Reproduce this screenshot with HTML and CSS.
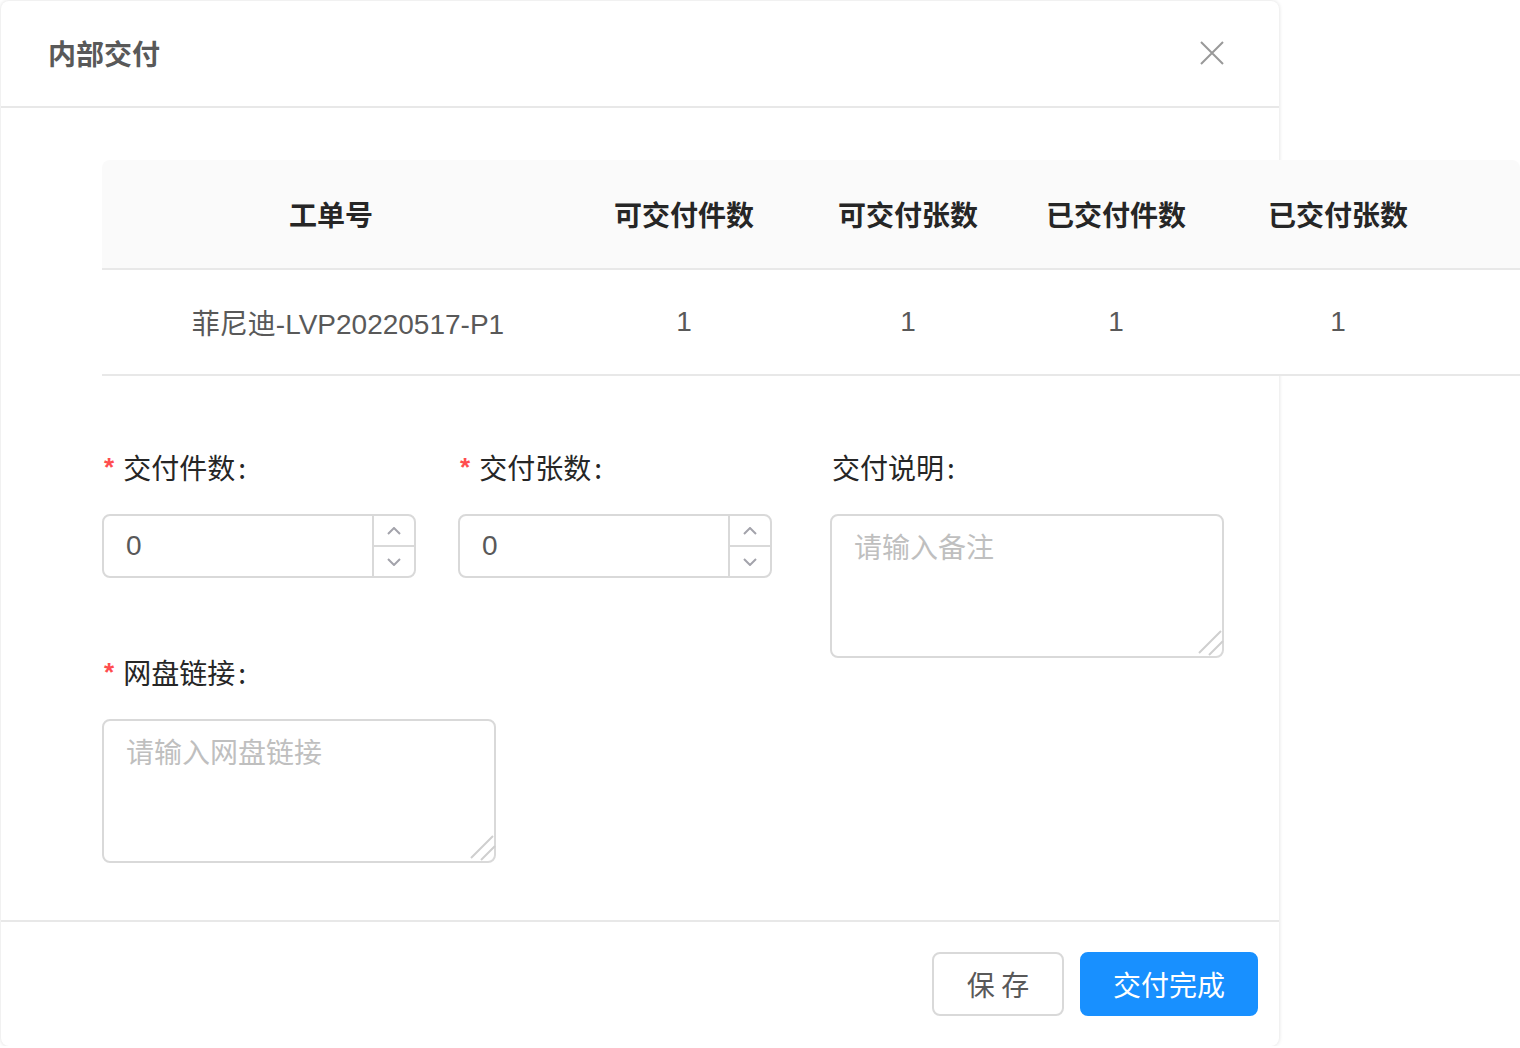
FILE: index.html
```html
<!DOCTYPE html>
<html lang="zh-CN">
<head>
<meta charset="utf-8">
<title>内部交付</title>
<link rel="stylesheet" href="styles.css">
</head>
<body>
<div class="modal">
  <div class="modal-header">
    <div class="modal-title">内部交付</div>
    <button class="modal-close" type="button" aria-label="关闭">
      <svg width="24" height="24" viewBox="0 0 24 24"><path d="M1 1L23 23M23 1L1 23" stroke="#999" stroke-width="2" fill="none"/></svg>
    </button>
  </div>
  <div class="modal-body">
    <div class="table">
      <div class="tr thead">
        <div class="cell c1">工单号</div>
        <div class="cell">可交付件数</div>
        <div class="cell">可交付张数</div>
        <div class="cell">已交付件数</div>
        <div class="cell">已交付张数</div>
        <div class="cell"></div>
      </div>
      <div class="tr tbody">
        <div class="cell c1d">菲尼迪-LVP20220517-P1</div>
        <div class="cell">1</div>
        <div class="cell">1</div>
        <div class="cell">1</div>
        <div class="cell">1</div>
        <div class="cell"></div>
      </div>
    </div>
    <div class="form">
      <div class="item i1">
        <div class="label req">交付件数</div>
        <div class="num">
          <input class="num-input" value="0">
          <div class="handler">
            <span class="hup"><svg width="14" height="8" viewBox="0 0 14 8"><polyline points="1,7 7,1 13,7" fill="none" stroke="#a3a3ab" stroke-width="2"/></svg></span>
            <span class="hdown"><svg width="14" height="8" viewBox="0 0 14 8"><polyline points="1,1 7,7 13,1" fill="none" stroke="#a3a3ab" stroke-width="2"/></svg></span>
          </div>
        </div>
      </div>
      <div class="item i2">
        <div class="label req">交付张数</div>
        <div class="num">
          <input class="num-input" value="0">
          <div class="handler">
            <span class="hup"><svg width="14" height="8" viewBox="0 0 14 8"><polyline points="1,7 7,1 13,7" fill="none" stroke="#a3a3ab" stroke-width="2"/></svg></span>
            <span class="hdown"><svg width="14" height="8" viewBox="0 0 14 8"><polyline points="1,1 7,7 13,1" fill="none" stroke="#a3a3ab" stroke-width="2"/></svg></span>
          </div>
        </div>
      </div>
      <div class="item i3">
        <div class="label">交付说明</div>
        <div class="ta-wrap">
          <textarea class="ta" placeholder="请输入备注"></textarea>
          <svg class="grip" width="28" height="28" viewBox="0 0 28 28"><path d="M3 25L25 3M13 27L27 13" stroke="#cfcfcf" stroke-width="2" fill="none"/></svg>
        </div>
      </div>
      <div class="item i4">
        <div class="label req">网盘链接</div>
        <div class="ta-wrap">
          <textarea class="ta" placeholder="请输入网盘链接"></textarea>
          <svg class="grip" width="28" height="28" viewBox="0 0 28 28"><path d="M3 25L25 3M13 27L27 13" stroke="#cfcfcf" stroke-width="2" fill="none"/></svg>
        </div>
      </div>
    </div>
  </div>
  <div class="modal-footer">
    <button class="btn" type="button">保 存</button>
    <button class="btn primary" type="button">交付完成</button>
  </div>
</div>
</body>
</html>
```

FILE: styles.css
```css
* { box-sizing: border-box; }
body {
  margin: 0;
  background: #fff;
  font-family: "Noto Sans CJK SC", "Noto Sans", sans-serif;
  font-size: 28px;
  color: #262626;
}
.modal {
  width: 1278px;
  margin: 1px 0 0 1px;
  background: #fff;
  border-radius: 8px;
  box-shadow: 0 0 4px rgba(0, 0, 0, 0.14);
}
.modal-header {
  display: flex;
  align-items: center;
  justify-content: space-between;
  padding: 30px 55px 31px 47px;
  border-bottom: 2px solid #e8e8e8;
}
.modal-title {
  font-size: 28px;
  line-height: 44px;
  font-weight: 700;
  color: #595959;
}
.modal-close {
  border: none;
  background: transparent;
  padding: 0;
  width: 24px;
  height: 24px;
  display: flex;
}
.modal-body {
  padding: 52px 0 57px 101px;
}
.table {
  width: 1418px;
}
.tr {
  display: grid;
  grid-template-columns: 470px 224px 224px 192px 252px 56px;
  border-bottom: 2px solid #e8e8e8;
}
.cell {
  display: flex;
  align-items: center;
  justify-content: center;
}
.thead {
  height: 110px;
  background: #fafafa;
  border-radius: 8px 8px 0 0;
  font-weight: 700;
  color: #262626;
}
.thead .c1 { padding-right: 12px; }
.tbody {
  height: 106px;
  background: #fff;
  color: #595959;
  font-family: "Liberation Sans", "Noto Sans CJK SC", sans-serif;
}
.tbody .c1d { padding-left: 22px; }
.form {
  margin-top: 69px;
  display: grid;
  grid-template-columns: 356px 372px 394px;
  row-gap: 72px;
  align-items: start;
}
.i1 { grid-column: 1; grid-row: 1; }
.i2 { grid-column: 2; grid-row: 1; }
.i3 { grid-column: 3; grid-row: 1 / span 2; }
.i4 { grid-column: 1 / span 2; grid-row: 2; }
.label {
  height: 44px;
  line-height: 44px;
  margin-bottom: 25px;
  color: #262626;
  padding-left: 2px;
}
.label::after {
  content: ":";
  margin-left: 3px;
}
.req {
  padding-left: 0;
}
.req::before {
  content: "*";
  color: #ff4d4f;
  font-family: "Liberation Sans", sans-serif;
  font-size: 26px;
  font-weight: 700;
  margin: 0 9px 0 2px;
  position: relative;
  top: -3px;
}
.num {
  width: 314px;
  height: 64px;
  border: 2px solid #d9d9d9;
  border-radius: 8px;
  display: flex;
  overflow: hidden;
}
.num-input {
  flex: 1;
  min-width: 0;
  border: none;
  outline: none;
  background: transparent;
  padding: 0 22px;
  font-family: "Liberation Sans", sans-serif;
  font-size: 28px;
  color: #595959;
}
.handler {
  width: 42px;
  border-left: 2px solid #d9d9d9;
  display: flex;
  flex-direction: column;
}
.hup, .hdown {
  flex: 1;
  display: flex;
  align-items: center;
  justify-content: center;
}
.hdown {
  border-top: 2px solid #d9d9d9;
}
.ta-wrap {
  position: relative;
  width: 394px;
  height: 144px;
}
.ta {
  display: block;
  width: 394px;
  height: 144px;
  border: 2px solid #d9d9d9;
  border-radius: 8px;
  padding: 8px 22px;
  font-family: inherit;
  font-size: 28px;
  line-height: 44px;
  color: #595959;
  resize: none;
  outline: none;
}
.ta::placeholder {
  color: #bfbfbf;
}
.grip {
  position: absolute;
  right: 0;
  bottom: 2px;
}
.modal-footer {
  display: flex;
  justify-content: flex-end;
  gap: 16px;
  padding: 30px 21px 30px 0;
  border-top: 2px solid #e8e8e8;
}
.btn {
  height: 64px;
  width: 132px;
  border: 2px solid #d9d9d9;
  border-radius: 8px;
  background: #fff;
  color: #595959;
  font-family: inherit;
  font-size: 28px;
  padding: 0;
}
.btn.primary {
  width: 178px;
  background: #1890ff;
  border-color: #1890ff;
  color: #fff;
}
```
